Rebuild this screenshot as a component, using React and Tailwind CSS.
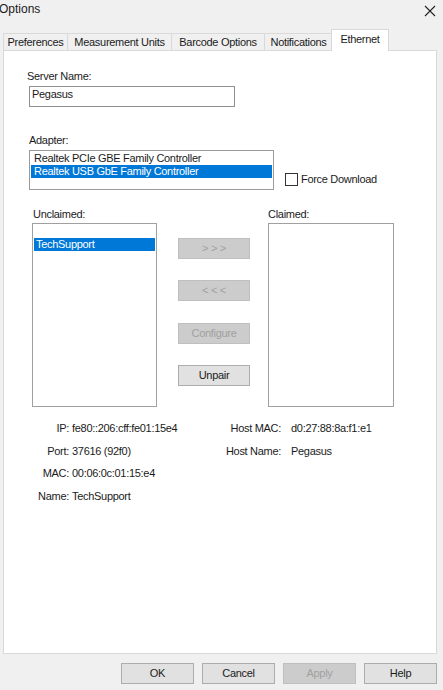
import React from "react";

function Tab({ label, w, selected }) {
  if (selected) {
    return (
      <div
        className="relative z-10 -mb-px h-[22px] bg-white border border-b-0 border-[#d9d9d9] flex justify-center pt-[3px] leading-[13px] -ml-[2px]"
        style={{ width: w }}
      >
        {label}
      </div>
    );
  }
  return (
    <div
      className="h-[17px] bg-[#f0f0f0] border border-b-0 border-[#d9d9d9] -ml-px first:ml-0 flex justify-center pt-[2px] leading-[13px]"
      style={{ width: w }}
    >
      {label}
    </div>
  );
}

function Btn({ children, disabled, className = "" }) {
  return (
    <div
      className={
        "h-[21px] flex items-center justify-center border leading-[13px] " +
        (disabled
          ? "bg-[#cccccc] border-[#bfbfbf] text-[#a0a0a0] "
          : "bg-[#e1e1e1] border-[#adadad] text-[#1b1b1b] ") +
        className
      }
    >
      {children}
    </div>
  );
}

function InfoRow({ label, value, w }) {
  return (
    <div className="flex h-[13px] leading-[13px]">
      <span className="text-right" style={{ width: w }}>
        {label}
      </span>
      <span className="pl-[3px]">{value}</span>
    </div>
  );
}

export default function App() {
  return (
    <div className="w-[443px] h-[690px] bg-[#f0f0f0] overflow-hidden text-[11px] tracking-[-0.3px] text-[#1b1b1b] font-['Liberation_Sans',Arial,sans-serif]">
      {/* title bar */}
      <div className="h-[28px] flex items-start justify-between">
        <span className="text-[12px] tracking-normal leading-[14px] mt-[2px] -ml-[1px]">Options</span>
        <svg width="12" height="12" viewBox="0 0 12 12" className="mt-[5px] mr-[7px]">
          <path d="M1 1 L11 11 M11 1 L1 11" stroke="#222" strokeWidth="1.1" fill="none" />
        </svg>
      </div>

      {/* tabs */}
      <div className="h-[22px] flex items-end pl-[3px]">
        <Tab label="Preferences" w={65} />
        <Tab label="Measurement Units" w={105} />
        <Tab label="Barcode Options" w={94} />
        <Tab label="Notifications" w={69} />
        <Tab label="Ethernet" w={58} selected />
      </div>

      {/* panel */}
      <div className="ml-[3px] w-[434px] h-[604px] bg-white border border-[#d9d9d9] pt-[19px]">
        <div className="ml-[23px] h-[13px] leading-[13px]">Server Name:</div>
        <div className="ml-[25px] mt-[3px] w-[206px] h-[21px] border border-[#8f8f8f] pl-[2px] pt-[1px] leading-[13px]">
          Pegasus
        </div>

        <div className="ml-[25px] mt-[27px] h-[13px] leading-[13px]">Adapter:</div>
        <div className="flex items-start mt-[3px]">
          <div className="ml-[25px] w-[245px] h-[40px] border border-[#9a9a9a] pt-[1px] px-[1px]">
            <div className="h-[13px] leading-[13px] pl-[3px]">Realtek PCIe GBE Family Controller</div>
            <div className="h-[13px] leading-[13px] pl-[3px] bg-[#0078d7] text-white">
              Realtek USB GbE Family Controller
            </div>
          </div>
          <div className="ml-[11px] mt-[23px] flex items-center h-[13px]">
            <div className="w-[13px] h-[13px] border border-[#333] bg-white" />
            <span className="ml-[3px] leading-[13px]">Force Download</span>
          </div>
        </div>

        {/* unclaimed / claimed */}
        <div className="flex mt-[18px] h-[13px] leading-[13px]">
          <span className="ml-[29px]">Unclaimed:</span>
          <span className="ml-[183px]">Claimed:</span>
        </div>
        <div className="flex items-start mt-[2px]">
          <div className="ml-[28px] w-[125px] h-[184px] border border-[#a0a0a0] pt-[1px] px-[1px]">
            <div className="h-[13px]" />
            <div className="h-[13px] leading-[13px] pl-[2px] bg-[#0078d7] text-white">TechSupport</div>
          </div>
          <div className="ml-[21px] w-[72px] pt-[15px] flex flex-col gap-[21.3px]">
            <Btn disabled>&gt; &gt; &gt;</Btn>
            <Btn disabled>&lt; &lt; &lt;</Btn>
            <Btn disabled>Configure</Btn>
            <Btn>Unpair</Btn>
          </div>
          <div className="ml-[18px] w-[126px] h-[184px] border border-[#a0a0a0]" />
        </div>

        {/* info */}
        <div className="flex mt-[15px]">
          <div className="w-[200px] flex flex-col gap-[9.5px]">
            <InfoRow label="IP:" value="fe80::206:cff:fe01:15e4" w={65} />
            <InfoRow label="Port:" value="37616 (92f0)" w={65} />
            <InfoRow label="MAC:" value="00:06:0c:01:15:e4" w={65} />
            <InfoRow label="Name:" value="TechSupport" w={65} />
          </div>
          <div className="flex flex-col gap-[9.5px]">
            <div className="flex h-[13px] leading-[13px]">
              <span className="w-[77px] text-right">Host MAC:</span>
              <span className="ml-[10px]">d0:27:88:8a:f1:e1</span>
            </div>
            <div className="flex h-[13px] leading-[13px]">
              <span className="w-[77px] text-right">Host Name:</span>
              <span className="ml-[10px]">Pegasus</span>
            </div>
          </div>
        </div>
      </div>

      {/* bottom buttons */}
      <div className="mt-[9px] flex justify-end gap-[8px] pr-[6px]">
        <Btn className="w-[73px]">OK</Btn>
        <Btn className="w-[73px]">Cancel</Btn>
        <Btn disabled className="w-[73px]">Apply</Btn>
        <Btn className="w-[73px]">Help</Btn>
      </div>
    </div>
  );
}
